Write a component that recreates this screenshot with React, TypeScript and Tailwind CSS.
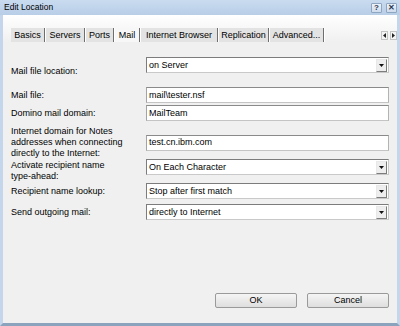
import * as React from 'react';

const FIELD_W = 'w-[243px]';

function DropArrow() {
  return (
    <div className="ml-auto mr-[1px] flex h-[13px] w-[11px] items-center justify-center border border-t-[#e8e8e8] border-l-[#e8e8e8] border-b-[#7d7d7d] border-r-[#7d7d7d] bg-[#eeeeee]">
      <svg width="5" height="3" viewBox="0 0 5 3" aria-hidden>
        <path d="M0 0H5L2.5 3Z" fill="#111" />
      </svg>
    </div>
  );
}

function Select({ value }: { value: string }) {
  return (
    <div
      className={`${FIELD_W} flex h-[16px] items-center border border-t-[#7c7c7c] border-l-[#7c7c7c] border-b-[#c9c9c9] border-r-[#c9c9c9] bg-white pl-[2px]`}
    >
      <span className="whitespace-nowrap leading-none">{value}</span>
      <DropArrow />
    </div>
  );
}

function Input({ value }: { value: string }) {
  return (
    <div
      className={`${FIELD_W} flex h-[16px] items-center border border-t-[#8a8a8a] border-l-[#a3a3a3] border-b-[#c4c4c4] border-r-[#b3b3b3] bg-white pl-[2px]`}
    >
      <span className="whitespace-nowrap leading-none">{value}</span>
    </div>
  );
}

const tabs = [
  { label: 'Basics', w: 'w-[33px]' },
  { label: 'Servers', w: 'w-[38px]' },
  { label: 'Ports', w: 'w-[27px]' },
  { label: 'Mail', w: 'w-[24px]', active: true },
  { label: 'Internet Browser', w: 'w-[76px]' },
  { label: 'Replication', w: 'w-[49px]' },
  { label: 'Advanced...', w: 'w-[53px]' },
];

function TitleButton({ children }: { children: React.ReactNode }) {
  return (
    <div className="flex h-[10px] w-[11px] items-center justify-center rounded-[1px] border border-[#8fa6c1] bg-gradient-to-b from-[#eef3fa] to-[#cddbec] text-[8px] font-bold leading-none text-[#2b3a4f]">
      {children}
    </div>
  );
}

function ScrollArrow({ dir }: { dir: 'left' | 'right' }) {
  return (
    <div className="flex h-[9px] w-[7px] items-center justify-center border border-[#c4c4c4] bg-[#f4f4f4]">
      <svg width="3" height="5" viewBox="0 0 3 5" aria-hidden>
        {dir === 'left' ? (
          <path d="M3 0V5L0 2.5Z" fill="#222" />
        ) : (
          <path d="M0 0V5L3 2.5Z" fill="#222" />
        )}
      </svg>
    </div>
  );
}

export default function App() {
  return (
    <div className="flex h-[326px] w-[400px] flex-col overflow-hidden bg-[#f0f0f0] font-['Liberation_Sans',Arial,sans-serif] text-[9px] text-black">
      {/* Titelleiste */}
      <div className="flex h-[15px] shrink-0 items-center bg-gradient-to-b from-[#c9dbef] to-[#b8cee7] pl-[4px] pr-[3px]">
        <span className="text-[8.5px] leading-none text-black">Edit Location</span>
        <div className="ml-auto flex gap-[4px] pt-[1px]">
          <TitleButton>?</TitleButton>
          <TitleButton>✕</TitleButton>
        </div>
      </div>

      <div className="flex flex-1 flex-col border-x-[3px] border-b-[3px] border-x-[#c3d6ec] border-b-[#8ca3be]">
        {/* Reiter */}
        <div className="flex h-[27px] items-end bg-gradient-to-b from-white to-[#f0f0f0] pl-[8px] pr-[0px]">
          <div className="flex h-[14px] items-stretch">
            {tabs.map((t) => (
              <React.Fragment key={t.label}>
                <div
                  className={`${t.w} flex items-center justify-center whitespace-nowrap leading-none ${
                    t.active ? 'bg-[#f7f7f7]' : 'bg-[#e3e3e3]'
                  }`}
                >
                  {t.label}
                </div>
                <div className="w-[1px] bg-[#6e6e6e]" />
                <div className="w-[1px] bg-white" />
              </React.Fragment>
            ))}
          </div>
          <div className="mb-[2px] ml-auto flex gap-[2px]">
            <ScrollArrow dir="left" />
            <ScrollArrow dir="right" />
          </div>
        </div>

        {/* Formular */}
        <div className="flex flex-1 flex-col px-[8px]">
          <div className="mt-[15px] flex items-start">
            <div className="w-[135px] pt-[8px] leading-[12px]">Mail file location:</div>
            <Select value="on Server" />
          </div>

          <div className="mt-[10px] flex items-center">
            <div className="w-[135px] leading-[11px]">Mail file:</div>
            <Input value={'mail\\tester.nsf'} />
          </div>

          <div className="mt-[2px] flex items-center">
            <div className="w-[135px] leading-[11px]">Domino mail domain:</div>
            <Input value="MailTeam" />
          </div>

          <div className="mt-[5px] flex items-center">
            <div className="w-[135px] leading-[11px]">
              Internet domain for Notes
              <br />
              addresses when connecting
              <br />
              directly to the Internet:
            </div>
            <Input value="test.cn.ibm.com" />
          </div>

          <div className="flex items-start">
            <div className="w-[135px] pt-[1px] leading-[11px]">
              Activate recipient name
              <br />
              type-ahead:
            </div>
            <Select value="On Each Character" />
          </div>

          <div className="mt-[1px] flex items-center">
            <div className="w-[135px] leading-[11px]">Recipient name lookup:</div>
            <Select value="Stop after first match" />
          </div>

          <div className="mt-[5px] flex items-center">
            <div className="w-[135px] leading-[11px]">Send outgoing mail:</div>
            <Select value="directly to Internet" />
          </div>

          <div className="flex-1" />

          <div className="mb-[15px] flex justify-end gap-[10px]">
            <button
              type="button"
              className="flex h-[15px] w-[82px] items-center justify-center rounded-[2px] border border-[#9a9a9a] bg-gradient-to-b from-[#f5f5f5] to-[#dedede] leading-none"
            >
              OK
            </button>
            <button
              type="button"
              className="flex h-[15px] w-[82px] items-center justify-center rounded-[2px] border border-[#9a9a9a] bg-gradient-to-b from-[#f5f5f5] to-[#dedede] leading-none"
            >
              Cancel
            </button>
          </div>
        </div>
      </div>
    </div>
  );
}
